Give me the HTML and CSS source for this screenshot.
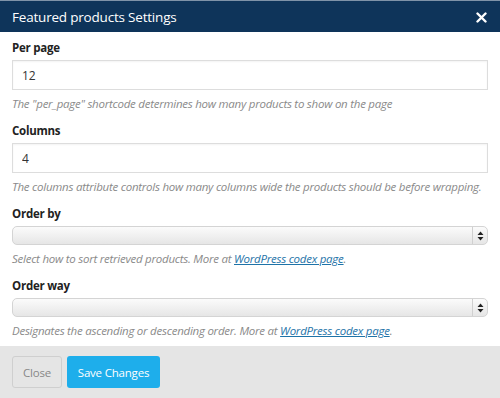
FILE: index.html
```html
<!DOCTYPE html>
<html lang="en">
<head>
  <meta charset="UTF-8" />
  <title>Featured products Settings</title>
  <link rel="stylesheet" href="styles.css">
</head>
<body>
  <div class="modal">
    <header class="modal-head">
      <h1>Featured products Settings</h1>
      <span class="close-x">
        <svg width="11" height="11" viewBox="0 0 11 11"><path d="M1.5 1.5L9.5 9.5M9.5 1.5L1.5 9.5" stroke="#fff" stroke-width="2.4" stroke-linecap="round"/></svg>
      </span>
    </header>

    <div class="modal-body">
      <div class="field">
        <label>Per page</label>
        <input type="text" value="12" />
        <p class="help">The "per_page" shortcode determines how many products to show on the page</p>
      </div>
      <div class="field">
        <label>Columns</label>
        <input type="text" value="4" />
        <p class="help">The columns attribute controls how many columns wide the products should be before wrapping.</p>
      </div>
      <div class="field">
        <label>Order by</label>
        <div class="select"><span class="arrows"><svg width="7" height="10" viewBox="0 0 7 10"><path d="M3.5 0.5L6.5 4H0.5Z M3.5 9.5L6.5 6H0.5Z" fill="#222"/></svg></span></div>
        <p class="help">Select how to sort retrieved products. More at <a href="#">WordPress codex page</a>.</p>
      </div>
      <div class="field">
        <label>Order way</label>
        <div class="select"><span class="arrows"><svg width="7" height="10" viewBox="0 0 7 10"><path d="M3.5 0.5L6.5 4H0.5Z M3.5 9.5L6.5 6H0.5Z" fill="#222"/></svg></span></div>
        <p class="help">Designates the ascending or descending order. More at <a href="#">WordPress codex page</a>.</p>
      </div>
    </div>

    <footer class="modal-foot">
      <button class="btn btn-close">Close</button>
      <button class="btn btn-save">Save Changes</button>
    </footer>
  </div>
</body>
</html>
```

FILE: styles.css
```css
* {
  margin: 0; padding: 0; box-sizing: border-box;
  font-family: 'Open Sans', sans-serif;
}
body {
  background: #fff; color: #333;
  width: 500px; height: 398px; overflow: hidden;
}
.modal-head {
  height: 32px;
  background: #0e345a;
  border-top: 1px solid #7f93a8;
  display: flex; align-items: center; justify-content: space-between;
  padding: 0 13px 0 12px;
}
.modal-head h1 {
  font-size: 13.5px; font-weight: 400; color: #fff;
  letter-spacing: -0.2px;
}
.close-x {
  display: flex; margin-top: 2px;
}
.modal-body {
  padding: 7px 12px 7px;
}
.field + .field {
  margin-top: 10px;
}
.field label {
  display: block;
  font-size: 11.5px; font-weight: 700; color: #222;
  letter-spacing: -0.25px;
  line-height: 18px; margin-bottom: 3px;
}
.field input {
  display: block; width: 100%; height: 30px;
  border: 1px solid #ddd;
  box-shadow: inset 0 1px 2px rgba(0,0,0,0.05);
  padding: 0 9px;
  font-size: 12px; color: #333;
  outline: none;
}
.help {
  margin-top: 6px;
  font-size: 11.5px; font-style: italic; color: #8a8a8a;
  line-height: 16px;
  letter-spacing: -0.25px;
}
.help a {
  color: #1e73a8;
}
.select {
  height: 19px; width: 100%;
  border: 1px solid #d4d4d4; border-radius: 5px;
  background: linear-gradient(#fbfbfb, #e6e6e6);
  display: flex; justify-content: flex-end;
}
.arrows {
  width: 15px;
  border-left: 1px solid #d0d0d0;
  display: flex; align-items: center; justify-content: center;
}
.modal-foot {
  height: 52px;
  background: #e5e5e5;
  display: flex; align-items: center; gap: 5px;
  padding: 0 12px;
}
.btn {
  height: 32px; border-radius: 3px;
  font-size: 11.5px; letter-spacing: -0.2px; cursor: pointer;
}
.btn-close {
  width: 50px;
  background: #e5e5e5; color: #888;
  border: 1px solid #cfcfcf;
}
.btn-save {
  width: 93px;
  background: #1eaeeb; color: #fff;
  border: none;
}
```
